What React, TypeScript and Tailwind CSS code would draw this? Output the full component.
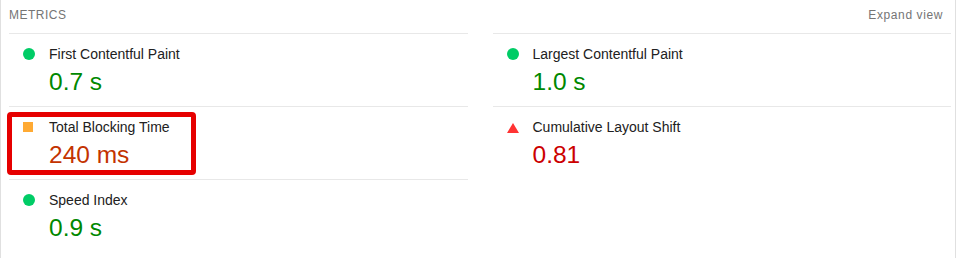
import React from "react";

type Kind = "pass" | "average" | "fail";

const metrics: { label: string; value: string; kind: Kind; boxed?: boolean }[] = [
  { label: "First Contentful Paint", value: "0.7 s", kind: "pass" },
  { label: "Largest Contentful Paint", value: "1.0 s", kind: "pass" },
  { label: "Total Blocking Time", value: "240 ms", kind: "average", boxed: true },
  { label: "Cumulative Layout Shift", value: "0.81", kind: "fail" },
  { label: "Speed Index", value: "0.9 s", kind: "pass" },
];

function Icon({ kind }: { kind: Kind }) {
  if (kind === "pass") {
    return <span className="block h-[12px] w-[12px] rounded-full bg-[#00cc66]" />;
  }
  if (kind === "average") {
    return <span className="block h-[10px] w-[10px] bg-[#ffaa33]" />;
  }
  return (
    <svg width="12" height="10" viewBox="0 0 12 10" className="block translate-y-[1px]">
      <polygon points="6,0 12,10 0,10" fill="#ff3333" />
    </svg>
  );
}

const valueColor: Record<Kind, string> = {
  pass: "text-[#008800]",
  average: "text-[#c33300]",
  fail: "text-[#cc0000]",
};

export default function App() {
  return (
    <div
      className="h-[258px] w-[956px] overflow-hidden bg-white border-l border-r border-[#e0e0e0] pl-[8px] pr-[4px]"
      style={{ fontFamily: '"Liberation Sans", Arial, sans-serif' }}
    >
      <div className="flex h-[33px] items-start justify-between pt-[7px] pr-[8px]">
        <span className="text-[12px] leading-[16px] tracking-[0.5px] uppercase text-[#757575]">
          Metrics
        </span>
        <span className="text-[12px] leading-[16px] tracking-[0.6px] text-[#757575]">
          Expand view
        </span>
      </div>
      <div className="grid grid-cols-2 gap-x-[25px]">
        {metrics.map((m) => (
          <div key={m.label} className="relative h-[73px] border-t border-[#e8e8e8] pt-[10px]">
            <div className="flex h-[20px] items-center">
              <div className="ml-[14px] mr-[14px] flex w-[12px] items-center">
                <Icon kind={m.kind} />
              </div>
              <span className="text-[14px] leading-[20px] text-[#212121]">{m.label}</span>
            </div>
            <div className={`mt-[4px] pl-[40px] text-[24.5px] leading-[28px] ${valueColor[m.kind]}`}>
              {m.value}
            </div>
            {m.boxed && (
              <div className="pointer-events-none absolute left-[-2px] top-[5px] h-[63px] w-[189px] rounded-[4px] border-[5px] border-[#e60000]" />
            )}
          </div>
        ))}
      </div>
    </div>
  );
}
